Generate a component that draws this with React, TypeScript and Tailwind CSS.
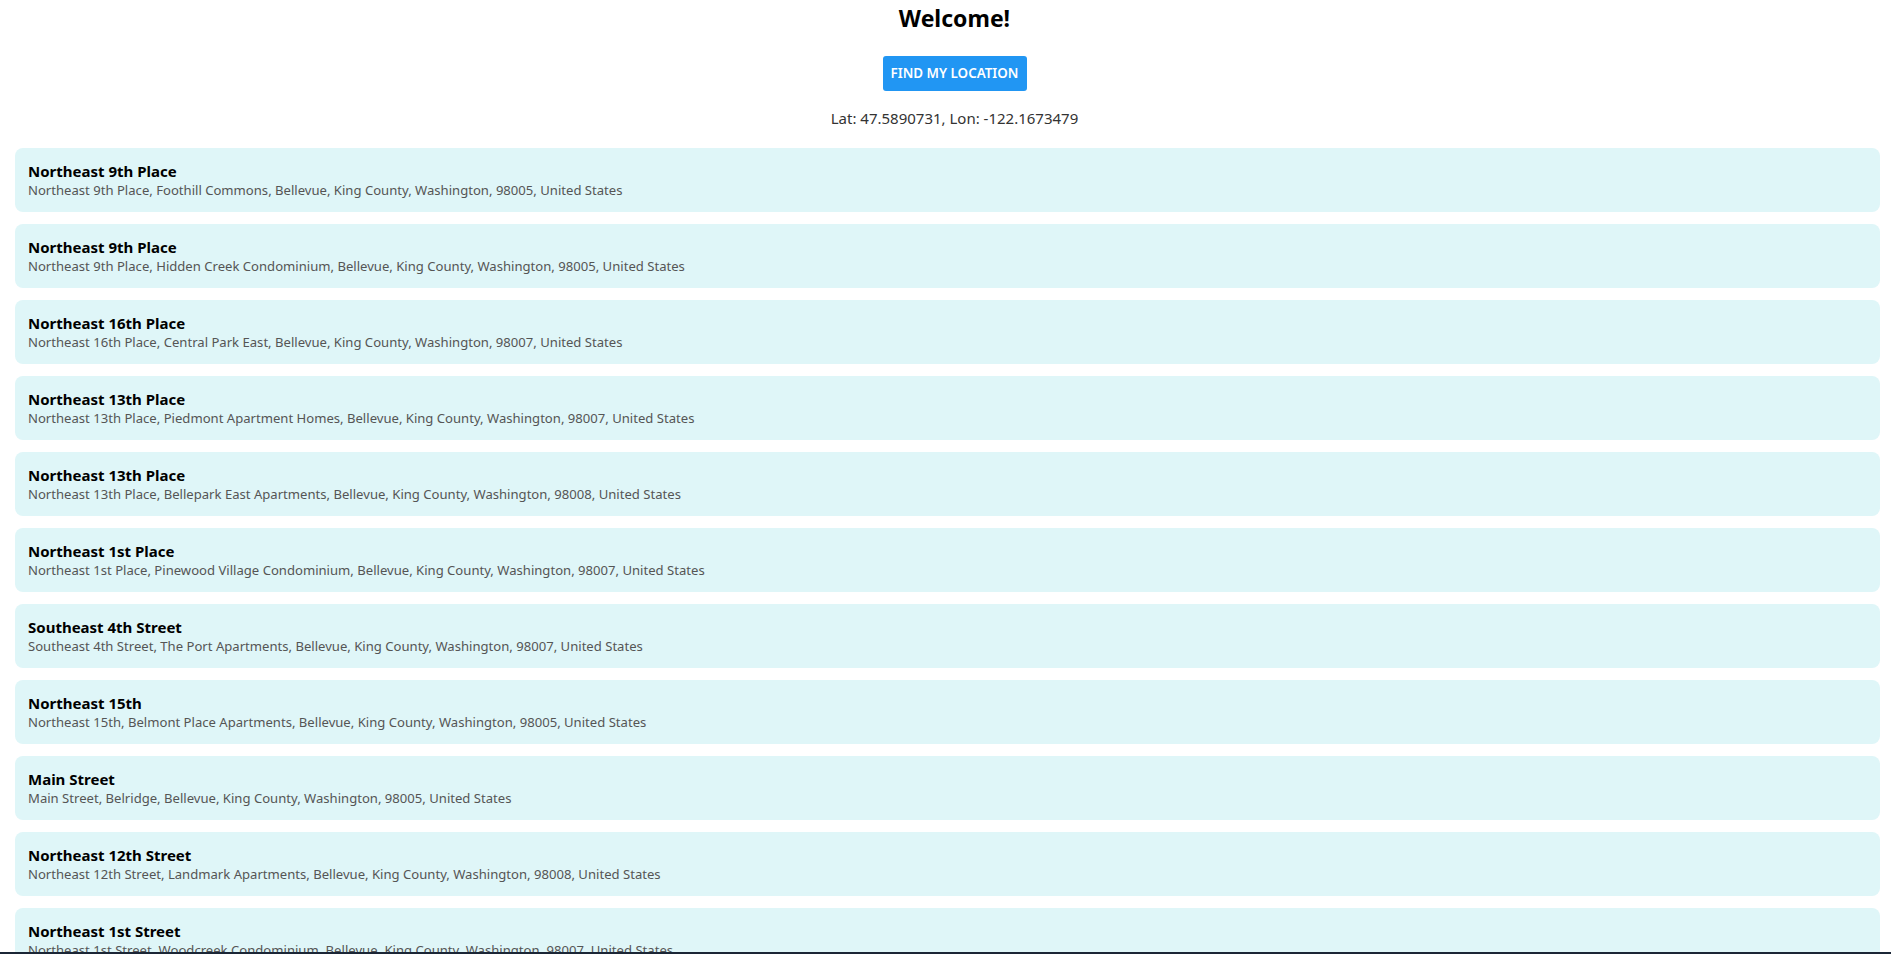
import React from "react";

interface Place {
  name: string;
  address: string;
}

const places: Place[] = [
  { name: "Northeast 9th Place", address: "Northeast 9th Place, Foothill Commons, Bellevue, King County, Washington, 98005, United States" },
  { name: "Northeast 9th Place", address: "Northeast 9th Place, Hidden Creek Condominium, Bellevue, King County, Washington, 98005, United States" },
  { name: "Northeast 16th Place", address: "Northeast 16th Place, Central Park East, Bellevue, King County, Washington, 98007, United States" },
  { name: "Northeast 13th Place", address: "Northeast 13th Place, Piedmont Apartment Homes, Bellevue, King County, Washington, 98007, United States" },
  { name: "Northeast 13th Place", address: "Northeast 13th Place, Bellepark East Apartments, Bellevue, King County, Washington, 98008, United States" },
  { name: "Northeast 1st Place", address: "Northeast 1st Place, Pinewood Village Condominium, Bellevue, King County, Washington, 98007, United States" },
  { name: "Southeast 4th Street", address: "Southeast 4th Street, The Port Apartments, Bellevue, King County, Washington, 98007, United States" },
  { name: "Northeast 15th", address: "Northeast 15th, Belmont Place Apartments, Bellevue, King County, Washington, 98005, United States" },
  { name: "Main Street", address: "Main Street, Belridge, Bellevue, King County, Washington, 98005, United States" },
  { name: "Northeast 12th Street", address: "Northeast 12th Street, Landmark Apartments, Bellevue, King County, Washington, 98008, United States" },
  { name: "Northeast 1st Street", address: "Northeast 1st Street, Woodcreek Condominium, Bellevue, King County, Washington, 98007, United States" },
  { name: "Northeast 8th Street", address: "Northeast 8th Street, Bellevue, King County, Washington, 98007, United States" },
];

function PlaceCard({ place }: { place: Place }) {
  return (
    <div className="rounded-lg bg-[#dff6f8] px-[13px] pt-[13px] pb-[12px]">
      <p className="text-[15px] leading-[20px] font-bold text-black">{place.name}</p>
      <p className="text-[13.1px] leading-[19px] text-[#555]">{place.address}</p>
    </div>
  );
}

export default function App() {
  return (
    <div
      className="min-h-screen bg-white text-[#222]"
      style={{ fontFamily: '"Noto Sans", "Open Sans", Arial, sans-serif' }}
    >
      <div className="flex flex-col items-center pl-[18px]">
        <h1 className="mt-[2px] text-[23px] leading-[32px] font-bold text-black">Welcome!</h1>
        <button className="mt-[22px] h-[35px] w-[144px] rounded-[3px] bg-[#2196f3] text-[13.4px] font-semibold text-white">
          FIND MY LOCATION
        </button>
        <p className="mt-[16px] text-[15px] leading-[22px] text-[#333]">Lat: 47.5890731, Lon: -122.1673479</p>
      </div>

      <div className="ml-[15px] mr-[11px] mt-[19px] flex flex-col gap-[12px] pb-4">
        {places.map((p, i) => (
          <PlaceCard key={i} place={p} />
        ))}
      </div>

      <div className="fixed bottom-0 left-0 right-0 h-[2px] bg-[#1b2636]" />
    </div>
  );
}
